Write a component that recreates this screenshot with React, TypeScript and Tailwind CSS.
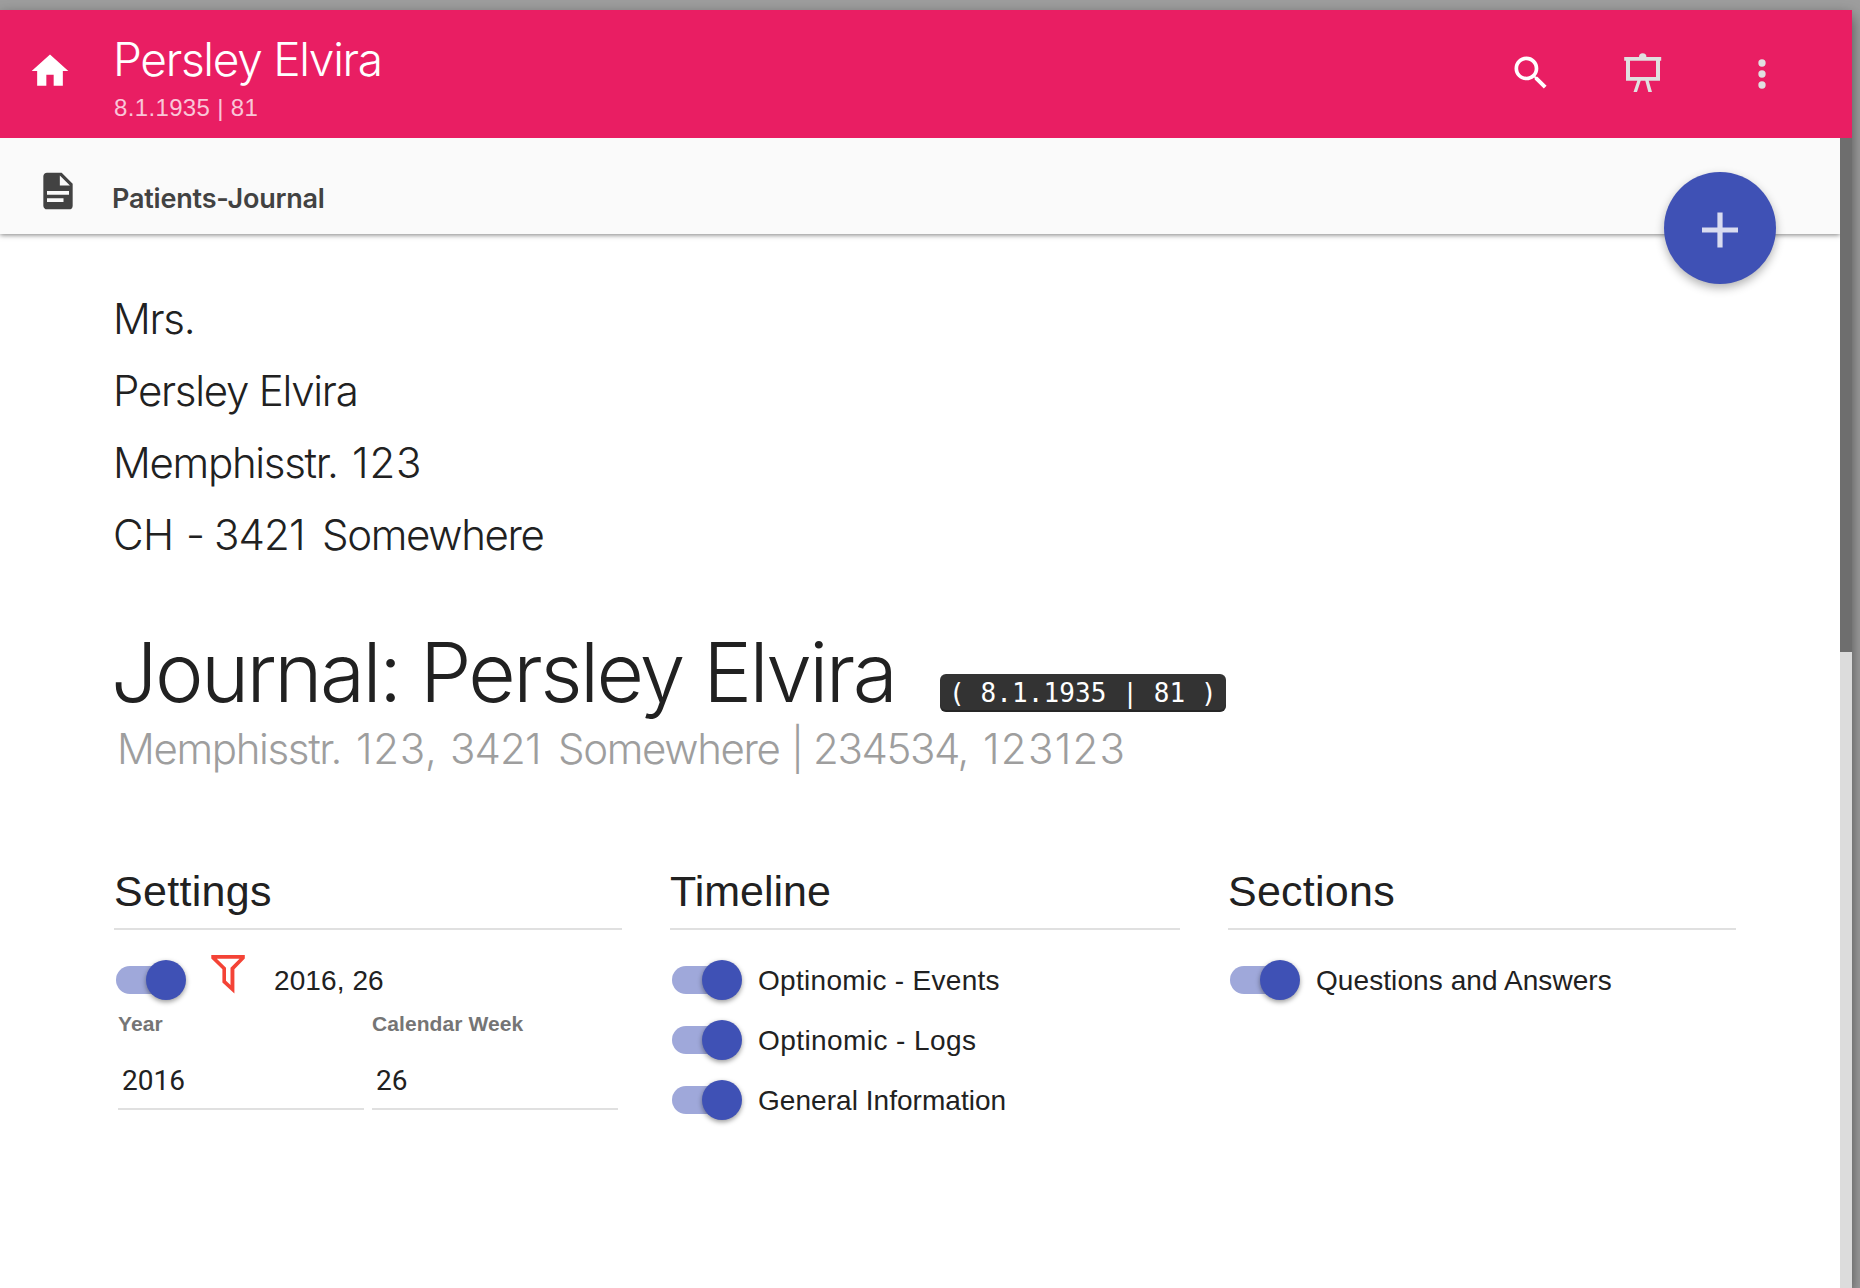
import React from "react";

const INTER = "font-['Inter',sans-serif] font-light";

function MdiIcon({ d, className }: { d: string; className: string }) {
  return (
    <svg viewBox="0 0 24 24" className={`size-11 shrink-0 fill-current ${className}`}>
      <path d={d} />
    </svg>
  );
}

const HOME = "M10,20V14H14V20H19V12H22L12,3L2,12H5V20H10Z";
const FILE =
  "M13,9H18.5L13,3.5V9M6,2H14L20,8V20A2,2 0 0,1 18,22H6C4.89,22 4,21.1 4,20V4C4,2.89 4.89,2 6,2M15,18V16H6V18H15M18,14V12H6V14H18Z";
const SEARCH =
  "M9.5,3A6.5,6.5 0 0,1 16,9.5C16,11.11 15.41,12.59 14.44,13.73L14.71,14H15.5L20.5,19L19,20.5L14,15.5V14.71L13.73,14.44C12.59,15.41 11.11,16 9.5,16A6.5,6.5 0 0,1 3,9.5A6.5,6.5 0 0,1 9.5,3M9.5,5C7,5 5,7 5,9.5C5,12 7,14 9.5,14C12,14 14,12 14,9.5C14,7 12,5 9.5,5Z";
const DOTS =
  "M12,16A2,2 0 0,1 14,18A2,2 0 0,1 12,20A2,2 0 0,1 10,18A2,2 0 0,1 12,16M12,10A2,2 0 0,1 14,12A2,2 0 0,1 12,14A2,2 0 0,1 10,12A2,2 0 0,1 12,10M12,4A2,2 0 0,1 14,6A2,2 0 0,1 12,8A2,2 0 0,1 10,6A2,2 0 0,1 12,4Z";

function Easel() {
  return (
    <svg viewBox="0 0 44 44" className="mt-10 ml-[67px] size-11 shrink-0 fill-[#e0e0e0]">
      <path d="M19 7A3.7 3.7 0 0 1 26.4 7Z" />
      <path
        fillRule="evenodd"
        d="M4.2 7H41.2V10.7H40V30.7H28.7L32 42H28.3L25.3 30.7H20.7L17 42H13.5L17.3 30.7H6V10.7H4.2ZM10 10.7V27H36V10.7Z"
      />
    </svg>
  );
}

function Funnel() {
  return (
    <svg viewBox="0 0 34 39" className="mt-[5px] ml-[25px] h-[39px] w-[34px] shrink-0 self-start fill-[#f44336]">
      <path
        fillRule="evenodd"
        d="M.3 0H33.8V3.4L23.4 14.3V38.6L11.4 27.6V14.3L.3 3.6ZM5.8 3.8L15 12.8V25.8L19.5 30V12.8L28.5 3.8Z"
      />
    </svg>
  );
}

function Toggle() {
  return (
    <span className="relative flex h-10 w-[72px] shrink-0 items-center pl-0.5">
      <span className="h-7 w-[68px] rounded-full bg-[#9fa8da]" />
      <span className="absolute top-0 right-0 size-10 rounded-full bg-[#3f51b5] shadow-[0_2px_5px_rgba(0,0,0,0.4)]" />
    </span>
  );
}

function Row({ label, spacing }: { label: string; spacing: string }) {
  return (
    <div className="flex h-[60px] items-center">
      <Toggle />
      <span className={`ml-4 pt-0.5 text-[28px] leading-[60px] whitespace-nowrap ${spacing}`}>{label}</span>
    </div>
  );
}

function Column({ title, spacing, children }: { title: string; spacing: string; children: React.ReactNode }) {
  return (
    <section>
      <h3 className={`mb-5 h-[69px] border-b-2 border-[#e0e0e0] text-[43px] leading-[60px] ${spacing}`}>{title}</h3>
      {children}
    </section>
  );
}

function Field({ label, value }: { label: string; value: string }) {
  return (
    <div className="w-[246px]">
      <div className="h-7 text-[21px] leading-7 font-bold tracking-[0.08px] text-[#757575]">{label}</div>
      <div className="mt-3 h-[60px] border-b-2 border-[#e0e0e0] pl-1 font-['Roboto',sans-serif] text-[28px] leading-[61px]">
        {value}
      </div>
    </div>
  );
}

export default function App() {
  return (
    <div className="h-[1288px] w-[1860px] overflow-hidden bg-[#9e9e9e] pt-2.5 font-['Liberation_Sans',sans-serif] text-[#212121]">
      <div className="relative flex h-[1278px] w-[1852px] flex-col bg-white shadow-[0_6px_14px_rgba(0,0,0,0.5)]">
        <header className="flex h-32 shrink-0 items-start bg-[#e91e63] pr-[68px] pl-7 text-white">
          <MdiIcon d={HOME} className="mt-[39px]" />
          <div className="mt-[19px] ml-[41px] flex-1">
            <h1 className={`${INTER} text-[46px] leading-[60px] tracking-[-1.3px]`}>Persley Elvira</h1>
            <div className="mt-px ml-px text-2xl leading-9 tracking-[0.35px] text-white/75">8.1.1935 | 81</div>
          </div>
          <MdiIcon d={SEARCH} className="mt-[41px]" />
          <Easel />
          <MdiIcon d={DOTS} className="mt-[41.5px] ml-[76px] text-[#e0e0e0]" />
        </header>

        <div className="flex min-h-0 flex-1">
          <main className="min-w-0 flex-1 overflow-hidden">
            <div className="flex h-24 items-start bg-[#fafafa] pl-9 text-[#424242] shadow-[0_1px_5px_rgba(0,0,0,0.5)]">
              <MdiIcon d={FILE} className="mt-[31px]" />
              <div className="mt-[41px] ml-8 font-['Inter',sans-serif] text-[27px] leading-10 font-semibold tracking-[-0.2px]">
                Patients-Journal
              </div>
            </div>

            <address className={`mt-[49px] ml-[113px] text-[42px] leading-[72px] whitespace-nowrap not-italic ${INTER}`}>
              <div className="tracking-[-1.3px]">Mrs.</div>
              <div className="tracking-[-1.25px]">Persley Elvira</div>
              <div className="flex">
                <span className="w-[239px] tracking-[-1.3px]">Memphisstr. </span>
                <span className="tracking-[0.9px]">123</span>
              </div>
              <div className="flex">
                <span className="w-[73px] tracking-[-0.5px]">CH </span>
                <span className="w-[28px]">- </span>
                <span className="w-[108px] tracking-[-0.9px]">3421 </span>
                <span className="tracking-[-1.35px]">Somewhere</span>
              </div>
            </address>

            <div className="mt-[54px] ml-[111px] flex items-start">
              <h2 className={`w-[829px] text-[82px] leading-[96px] tracking-[-2.6px] ${INTER}`}>
                Journal: Persley Elvira
              </h2>
              <code className="mt-[49px] h-[38px] w-[286px] rounded-md bg-[#333] pl-[9px] font-['DejaVu_Sans_Mono',monospace] text-[26px] leading-[38px] tracking-[0.1px] whitespace-nowrap text-white shadow-[inset_0_-2px_0_rgba(0,0,0,0.25)]">
                ( 8.1.1935 | 81 )
              </code>
            </div>
            <p className={`-mt-0.5 ml-[117px] flex text-[42px] leading-[60px] whitespace-nowrap text-[#9e9e9e] ${INTER}`}>
              <span className="w-[239px] tracking-[-1.35px]">Memphisstr. </span>
              <span className="w-[94px] tracking-[0.7px]">123, </span>
              <span className="w-[108px] tracking-[-0.9px]">3421 </span>
              <span className="w-[233px] tracking-[-1.35px]">Somewhere </span>
              <span className="w-[22px]">| </span>
              <span className="w-[170px] tracking-[-1.4px]">234534, </span>
              <span className="tracking-[1.3px]">123123</span>
            </p>

            <div className="mt-[82px] ml-[114px] grid grid-cols-[508px_510px_508px] gap-12">
              <Column title="Settings" spacing="tracking-[0.3px]">
                <div className="flex h-[60px] items-center">
                  <Toggle />
                  <Funnel />
                  <span className="ml-[29px] pt-0.5 text-[28px] leading-[60px] tracking-[0.1px]">2016, 26</span>
                </div>
                <div className="ml-1 flex gap-2">
                  <Field label="Year" value="2016" />
                  <Field label="Calendar Week" value="26" />
                </div>
              </Column>
              <Column title="Timeline" spacing="">
                <Row label="Optinomic - Events" spacing="tracking-[0.3px]" />
                <Row label="Optinomic - Logs" spacing="tracking-[0.42px]" />
                <Row label="General Information" spacing="tracking-[0.04px]" />
              </Column>
              <Column title="Sections" spacing="tracking-[0.25px]">
                <Row label="Questions and Answers" spacing="tracking-[0.08px]" />
              </Column>
            </div>
          </main>
          <div className="w-3 shrink-0 bg-[#dcdcdc]">
            <div className="h-[514px] bg-[#6e6e6e]" />
          </div>
        </div>

        <button className="absolute top-[162px] right-[76px] flex size-28 items-center justify-center rounded-full bg-[#3f51b5] shadow-[0_4px_10px_rgba(0,0,0,0.3)]">
          <svg viewBox="0 0 36 36" className="mt-[3px] size-9 fill-[#d9dcf0]">
            <path d="M15.4 .4H20.6V15.5H36V20.6H20.6V35.6H15.4V20.6H0V15.5H15.4Z" />
          </svg>
        </button>
      </div>
    </div>
  );
}
